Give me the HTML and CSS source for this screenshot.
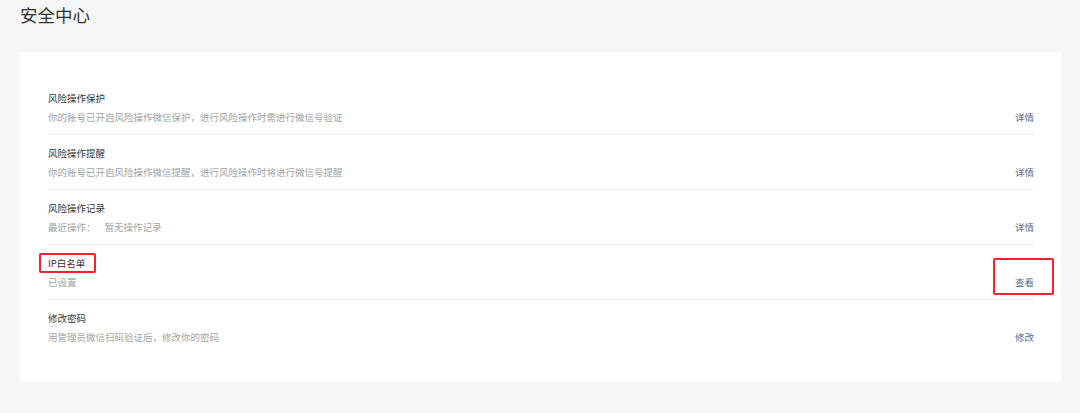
FILE: index.html
```html
<!DOCTYPE html>
<html>
  <head>
    <title>安全中心</title>
    <link rel="stylesheet" href="styles.css">
  </head>
  <body>
    <div class="page">
      <h2 class="page-title">安全中心</h2>
      <div class="card">
        <div class="item">
          <div class="info">
            <div class="item-title">风险操作保护</div>
            <div class="item-desc">你的账号已开启风险操作微信保护，进行风险操作时需进行微信号验证</div>
          </div>
          <a href="#" class="item-link">详情</a>
        </div>
        <div class="item">
          <div class="info">
            <div class="item-title">风险操作提醒</div>
            <div class="item-desc">你的账号已开启风险操作微信提醒，进行风险操作时将进行微信号提醒</div>
          </div>
          <a href="#" class="item-link">详情</a>
        </div>
        <div class="item">
          <div class="info">
            <div class="item-title">风险操作记录</div>
            <div class="item-desc">最近操作：<span class="gap"></span>暂无操作记录</div>
          </div>
          <a href="#" class="item-link">详情</a>
        </div>
        <div class="item">
          <div class="info">
            <div class="item-title"><span class="mark mark-title">IP白名单</span></div>
            <div class="item-desc">已设置</div>
          </div>
          <a href="#" class="item-link mark mark-link">查看</a>
        </div>
        <div class="item">
          <div class="info">
            <div class="item-title">修改密码</div>
            <div class="item-desc">用管理员微信扫码验证后，修改你的密码</div>
          </div>
          <a href="#" class="item-link">修改</a>
        </div>
      </div>
    </div>
  </body>
</html>
```

FILE: styles.css
```css
body {
  margin: 0;
  background-color: #f5f6f8;
  font-family: "Noto Sans CJK SC", "Noto Sans", sans-serif;
  color: #333;
}
.page {
  padding: 0 19px 0 20px;
}
.page-title {
  margin: 0;
  font-size: 17.5px;
  font-weight: normal;
  line-height: 30px;
  color: #333;
}
.card {
  margin-top: 22px;
  background-color: #fff;
  border-radius: 2px;
  padding: 28px 27px 28px 28px;
}
.item {
  display: flex;
  justify-content: space-between;
  align-items: flex-end;
  padding: 11px 0 10px;
  border-bottom: 1px solid #eeeff1;
}
.item:last-child {
  border-bottom: none;
}
.item-title {
  font-size: 9.5px;
  line-height: 14px;
  color: #333;
}
.item-desc {
  margin-top: 5px;
  font-size: 9.5px;
  line-height: 14px;
  color: #a3a3a3;
}
.gap {
  display: inline-block;
  width: 9px;
}
.item-link {
  font-size: 9.5px;
  line-height: 14px;
  color: #5a6a8e;
  text-decoration: none;
}
.mark {
  position: relative;
}
.mark::after {
  content: "";
  position: absolute;
  border: 2px solid #f5222d;
  border-radius: 2px;
}
.mark-title::after {
  left: -9px;
  right: -11px;
  top: -3px;
  bottom: -3px;
}
.mark-link::after {
  left: -22px;
  right: -20px;
  top: -17px;
  bottom: -6px;
}
```
